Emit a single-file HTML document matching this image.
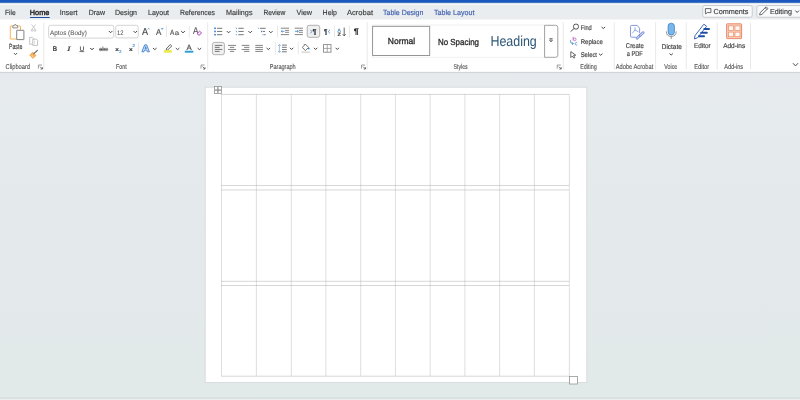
<!DOCTYPE html>
<html><head><meta charset="utf-8"><title>Word</title>
<style>html,body{margin:0;padding:0;width:800px;height:400px;overflow:hidden;background:#e3e8ea;font-family:"Liberation Sans",sans-serif;}
svg{display:block;will-change:transform;text-rendering:geometricPrecision;}</style></head>
<body><svg width="800" height="400" viewBox="0 0 800 400" font-family="Liberation Sans">
<defs><linearGradient id="bg" x1="0" y1="0" x2="0" y2="1"><stop offset="0" stop-color="#e7ebef"/><stop offset="1" stop-color="#e2e9e9"/></linearGradient></defs>
<rect x="0" y="0" width="800" height="400" fill="url(#bg)" stroke="none" stroke-width="1" rx="0" />
<rect x="0" y="0" width="800" height="2.8" fill="#1a58bd" stroke="none" stroke-width="1" rx="0" />
<rect x="0" y="2.8" width="800" height="0.6" fill="#3f74c4" stroke="none" stroke-width="1" rx="0" />
<rect x="0" y="3.4" width="800" height="16.1" fill="#eaedf0" stroke="none" stroke-width="1" rx="0" />
<rect x="0" y="3.6" width="800" height="1.4" fill="#f6f9fb" stroke="none" stroke-width="1" rx="0" />
<rect x="0" y="19.5" width="800" height="52.4" fill="#ffffff" stroke="none" stroke-width="1" rx="0" />
<rect x="0" y="71.9" width="800" height="1.2" fill="#d3d6d9" stroke="none" stroke-width="1" rx="0" />
<rect x="0" y="397.6" width="800" height="1.2" fill="#d3d8da" stroke="none" stroke-width="1" rx="0" />
<rect x="0" y="398.8" width="800" height="1.2" fill="#eceff0" stroke="none" stroke-width="1" rx="0" />
<text x="5.00" y="14.60" font-size="7.39" fill="#3c3c3c" font-weight="normal" textLength="10.60" lengthAdjust="spacingAndGlyphs" font-family="Liberation Sans" font-style="normal" stroke="#3c3c3c" stroke-width="0.15">File</text>
<text x="29.75" y="14.60" font-size="7.39" fill="#2e2e2e" font-weight="normal" textLength="19.65" lengthAdjust="spacingAndGlyphs" font-family="Liberation Sans" font-style="normal" stroke="#2e2e2e" stroke-width="0.45">Home</text>
<text x="59.75" y="14.60" font-size="7.39" fill="#3c3c3c" font-weight="normal" textLength="17.75" lengthAdjust="spacingAndGlyphs" font-family="Liberation Sans" font-style="normal" stroke="#3c3c3c" stroke-width="0.15">Insert</text>
<text x="88.75" y="14.60" font-size="7.39" fill="#3c3c3c" font-weight="normal" textLength="16.25" lengthAdjust="spacingAndGlyphs" font-family="Liberation Sans" font-style="normal" stroke="#3c3c3c" stroke-width="0.15">Draw</text>
<text x="115.00" y="14.60" font-size="7.39" fill="#3c3c3c" font-weight="normal" textLength="22.00" lengthAdjust="spacingAndGlyphs" font-family="Liberation Sans" font-style="normal" stroke="#3c3c3c" stroke-width="0.15">Design</text>
<text x="148.00" y="14.60" font-size="7.39" fill="#3c3c3c" font-weight="normal" textLength="21.00" lengthAdjust="spacingAndGlyphs" font-family="Liberation Sans" font-style="normal" stroke="#3c3c3c" stroke-width="0.15">Layout</text>
<text x="180.00" y="14.60" font-size="7.39" fill="#3c3c3c" font-weight="normal" textLength="35.00" lengthAdjust="spacingAndGlyphs" font-family="Liberation Sans" font-style="normal" stroke="#3c3c3c" stroke-width="0.15">References</text>
<text x="226.00" y="14.60" font-size="7.39" fill="#3c3c3c" font-weight="normal" textLength="26.50" lengthAdjust="spacingAndGlyphs" font-family="Liberation Sans" font-style="normal" stroke="#3c3c3c" stroke-width="0.15">Mailings</text>
<text x="263.50" y="14.60" font-size="7.39" fill="#3c3c3c" font-weight="normal" textLength="21.90" lengthAdjust="spacingAndGlyphs" font-family="Liberation Sans" font-style="normal" stroke="#3c3c3c" stroke-width="0.15">Review</text>
<text x="296.50" y="14.60" font-size="7.39" fill="#3c3c3c" font-weight="normal" textLength="15.50" lengthAdjust="spacingAndGlyphs" font-family="Liberation Sans" font-style="normal" stroke="#3c3c3c" stroke-width="0.15">View</text>
<text x="322.60" y="14.60" font-size="7.39" fill="#3c3c3c" font-weight="normal" textLength="14.40" lengthAdjust="spacingAndGlyphs" font-family="Liberation Sans" font-style="normal" stroke="#3c3c3c" stroke-width="0.15">Help</text>
<text x="347.00" y="14.60" font-size="7.39" fill="#3c3c3c" font-weight="normal" textLength="26.00" lengthAdjust="spacingAndGlyphs" font-family="Liberation Sans" font-style="normal" stroke="#3c3c3c" stroke-width="0.15">Acrobat</text>
<text x="383.00" y="14.60" font-size="7.39" fill="#3d5fae" font-weight="normal" textLength="40.40" lengthAdjust="spacingAndGlyphs" font-family="Liberation Sans" font-style="normal" stroke="#3d5fae" stroke-width="0.15">Table Design</text>
<text x="434.00" y="14.60" font-size="7.39" fill="#3d5fae" font-weight="normal" textLength="40.40" lengthAdjust="spacingAndGlyphs" font-family="Liberation Sans" font-style="normal" stroke="#3d5fae" stroke-width="0.15">Table Layout</text>
<rect x="29.9" y="16.9" width="20.0" height="1.15" fill="#1f4f9e" stroke="none" stroke-width="1" rx="0.5" />
<rect x="702.75" y="5.5" width="49.5" height="11.75" fill="#f9fafb" stroke="#c3c7cb" stroke-width="0.9" rx="2" />
<path d="M705.4 8.6 H710.9 V12.6 H707.2 L705.6 14.0 V12.6 H705.4 Z" fill="none" stroke="#444" stroke-width="0.8" />
<text x="713.50" y="13.90" font-size="7.25" fill="#3c3c3c" font-weight="normal" textLength="35.00" lengthAdjust="spacingAndGlyphs" font-family="Liberation Sans" font-style="normal" stroke="#3c3c3c" stroke-width="0.15">Comments</text>
<rect x="756.9" y="5.5" width="50" height="11.75" fill="#f9fafb" stroke="#c3c7cb" stroke-width="0.9" rx="2" />
<path d="M759.6 15.0 L760.2 12.6 L766.2 6.8 L767.9 8.5 L761.9 14.4 Z M765.2 7.8 L766.9 9.5" fill="none" stroke="#444" stroke-width="0.8" />
<text x="770.00" y="13.90" font-size="7.25" fill="#3c3c3c" font-weight="normal" textLength="21.90" lengthAdjust="spacingAndGlyphs" font-family="Liberation Sans" font-style="normal" stroke="#3c3c3c" stroke-width="0.15">Editing</text>
<path d="M795.70 10.90 L797.20 12.50 L798.70 10.90" fill="none" stroke="#4a4a4a" stroke-width="1.0" stroke-linecap="round" stroke-linejoin="round"/>
<line x1="43.8" y1="22.5" x2="43.8" y2="69.5" stroke="#e2e2e2" stroke-width="0.8" />
<line x1="207.7" y1="22.5" x2="207.7" y2="69.5" stroke="#e2e2e2" stroke-width="0.8" />
<line x1="367.2" y1="22.5" x2="367.2" y2="69.5" stroke="#e2e2e2" stroke-width="0.8" />
<line x1="563.3" y1="22.5" x2="563.3" y2="69.5" stroke="#e2e2e2" stroke-width="0.8" />
<line x1="614.3" y1="22.5" x2="614.3" y2="69.5" stroke="#e2e2e2" stroke-width="0.8" />
<line x1="655.6" y1="22.5" x2="655.6" y2="69.5" stroke="#e2e2e2" stroke-width="0.8" />
<line x1="686.3" y1="22.5" x2="686.3" y2="69.5" stroke="#e2e2e2" stroke-width="0.8" />
<line x1="717.2" y1="22.5" x2="717.2" y2="69.5" stroke="#e2e2e2" stroke-width="0.8" />
<line x1="750.5" y1="22.5" x2="750.5" y2="69.5" stroke="#e2e2e2" stroke-width="0.8" />
<line x1="166.5" y1="25.8" x2="166.5" y2="37.4" stroke="#e2e2e2" stroke-width="0.8" />
<line x1="189.3" y1="25.8" x2="189.3" y2="37.4" stroke="#e2e2e2" stroke-width="0.8" />
<line x1="277.5" y1="25.8" x2="277.5" y2="37.4" stroke="#e2e2e2" stroke-width="0.8" />
<line x1="334.5" y1="25.8" x2="334.5" y2="37.4" stroke="#e2e2e2" stroke-width="0.8" />
<line x1="349.5" y1="25.8" x2="349.5" y2="37.4" stroke="#e2e2e2" stroke-width="0.8" />
<line x1="138.4" y1="42.4" x2="138.4" y2="54.7" stroke="#e2e2e2" stroke-width="0.8" />
<line x1="275.3" y1="42.4" x2="275.3" y2="54.7" stroke="#e2e2e2" stroke-width="0.8" />
<line x1="298.3" y1="42.4" x2="298.3" y2="54.7" stroke="#e2e2e2" stroke-width="0.8" />
<text x="5.60" y="68.90" font-size="7.10" fill="#4a4a4a" font-weight="normal" textLength="24.40" lengthAdjust="spacingAndGlyphs" font-family="Liberation Sans" font-style="normal" stroke="#4a4a4a" stroke-width="0.1">Clipboard</text>
<text x="116.00" y="68.90" font-size="7.10" fill="#4a4a4a" font-weight="normal" textLength="10.80" lengthAdjust="spacingAndGlyphs" font-family="Liberation Sans" font-style="normal" stroke="#4a4a4a" stroke-width="0.1">Font</text>
<text x="269.80" y="68.90" font-size="7.10" fill="#4a4a4a" font-weight="normal" textLength="25.90" lengthAdjust="spacingAndGlyphs" font-family="Liberation Sans" font-style="normal" stroke="#4a4a4a" stroke-width="0.1">Paragraph</text>
<text x="453.60" y="68.90" font-size="7.10" fill="#4a4a4a" font-weight="normal" textLength="14.00" lengthAdjust="spacingAndGlyphs" font-family="Liberation Sans" font-style="normal" stroke="#4a4a4a" stroke-width="0.1">Styles</text>
<text x="580.25" y="68.90" font-size="7.10" fill="#4a4a4a" font-weight="normal" textLength="16.50" lengthAdjust="spacingAndGlyphs" font-family="Liberation Sans" font-style="normal" stroke="#4a4a4a" stroke-width="0.1">Editing</text>
<text x="615.75" y="68.90" font-size="7.10" fill="#4a4a4a" font-weight="normal" textLength="37.50" lengthAdjust="spacingAndGlyphs" font-family="Liberation Sans" font-style="normal" stroke="#4a4a4a" stroke-width="0.1">Adobe Acrobat</text>
<text x="664.25" y="68.90" font-size="7.10" fill="#4a4a4a" font-weight="normal" textLength="13.05" lengthAdjust="spacingAndGlyphs" font-family="Liberation Sans" font-style="normal" stroke="#4a4a4a" stroke-width="0.1">Voice</text>
<text x="694.25" y="68.90" font-size="7.10" fill="#4a4a4a" font-weight="normal" textLength="14.95" lengthAdjust="spacingAndGlyphs" font-family="Liberation Sans" font-style="normal" stroke="#4a4a4a" stroke-width="0.1">Editor</text>
<text x="724.20" y="68.90" font-size="7.10" fill="#4a4a4a" font-weight="normal" textLength="18.80" lengthAdjust="spacingAndGlyphs" font-family="Liberation Sans" font-style="normal" stroke="#4a4a4a" stroke-width="0.1">Add-ins</text>
<path d="M42.0 65.0 H38.4 V68.6" fill="none" stroke="#777" stroke-width="0.7" />
<path d="M40.0 66.6 L42.4 69.0 M42.4 67.2 V69.0 H40.6" fill="none" stroke="#555" stroke-width="0.8" />
<path d="M204.6 65.0 H201 V68.6" fill="none" stroke="#777" stroke-width="0.7" />
<path d="M202.6 66.6 L205 69.0 M205 67.2 V69.0 H203.2" fill="none" stroke="#555" stroke-width="0.8" />
<path d="M365.1 65.0 H361.5 V68.6" fill="none" stroke="#777" stroke-width="0.7" />
<path d="M363.1 66.6 L365.5 69.0 M365.5 67.2 V69.0 H363.7" fill="none" stroke="#555" stroke-width="0.8" />
<path d="M560.8000000000001 65.0 H557.2 V68.6" fill="none" stroke="#777" stroke-width="0.7" />
<path d="M558.8000000000001 66.6 L561.2 69.0 M561.2 67.2 V69.0 H559.4000000000001" fill="none" stroke="#555" stroke-width="0.8" />
<path d="M793.20 63.50 L795.50 65.90 L797.80 63.50" fill="none" stroke="#4a4a4a" stroke-width="1.0" stroke-linecap="round" stroke-linejoin="round"/>
<rect x="10.3" y="26.0" width="10.2" height="13.0" fill="#fff" stroke="#f0a53c" stroke-width="0.85" rx="0.4" />
<path d="M12.7 27.9 L13.2 25.4 H14.4 L15.25 24.1 L16.1 25.4 H17.3 L17.8 27.9 Z" fill="#f2f2f2" stroke="#7a7a7a" stroke-width="0.75" />
<rect x="16.7" y="30.3" width="7.2" height="9.3" fill="#fff" stroke="#6e6e6e" stroke-width="0.85" rx="0.3" />
<text x="9.00" y="48.50" font-size="7.54" fill="#3a3a3a" font-weight="normal" textLength="13.30" lengthAdjust="spacingAndGlyphs" font-family="Liberation Sans" font-style="normal" stroke="#3a3a3a" stroke-width="0.15">Paste</text>
<path d="M14.20 53.35 L15.50 54.65 L16.80 53.35" fill="none" stroke="#4a4a4a" stroke-width="1.0" stroke-linecap="round" stroke-linejoin="round"/>
<path d="M31.6 24.4 L35.4 29.6 M35.6 24.4 L31.8 29.6" fill="none" stroke="#b8b8b8" stroke-width="0.7" />
<circle cx="32.2" cy="30.4" r="0.9" fill="none" stroke="#b8b8b8" stroke-width="0.7"/>
<circle cx="35.0" cy="30.4" r="0.9" fill="none" stroke="#b8b8b8" stroke-width="0.7"/>
<path d="M29.7 37.3 H32.4 L33.4 38.3 V44.2 H29.7 Z" fill="#fff" stroke="#b3b3b3" stroke-width="0.8" />
<path d="M32.8 39.2 H36.6 L37.6 40.2 V45.4 H32.8 Z" fill="#fff" stroke="#b3b3b3" stroke-width="0.8" />
<line x1="34.6" y1="40.6" x2="34.6" y2="44.0" stroke="#c8c8c8" stroke-width="0.6" />
<path d="M29.8 55.2 L32.6 52.2 L36.0 55.4 L33.0 58.4 Z" fill="#f6b35a" stroke="#e58f2c" stroke-width="0.6" stroke-linejoin="round"/>
<line x1="31.6" y1="55.4" x2="33.4" y2="57.0" stroke="#fff3e0" stroke-width="0.6" />
<line x1="33.8" y1="53.6" x2="37.4" y2="50.4" stroke="#666" stroke-width="1.2" stroke-linecap="round"/>
<rect x="48.6" y="25.3" width="65.2" height="12.8" fill="#fff" stroke="#c9c9c9" stroke-width="0.8" rx="2" />
<text x="50.10" y="34.50" font-size="6.67" fill="#585858" font-weight="normal" textLength="36.70" lengthAdjust="spacingAndGlyphs" font-family="Liberation Sans" font-style="normal" stroke="#585858" stroke-width="0.05">Aptos (Body)</text>
<path d="M109.10 31.25 L110.60 32.75 L112.10 31.25" fill="none" stroke="#4a4a4a" stroke-width="1.0" stroke-linecap="round" stroke-linejoin="round"/>
<rect x="115.7" y="25.3" width="22.5" height="12.6" fill="#fff" stroke="#c9c9c9" stroke-width="0.8" rx="2" />
<text x="116.90" y="34.50" font-size="6.67" fill="#555" font-weight="normal" textLength="6.50" lengthAdjust="spacingAndGlyphs" font-family="Liberation Sans" font-style="normal" stroke="#555" stroke-width="0.05">12</text>
<path d="M133.80 31.25 L135.30 32.75 L136.80 31.25" fill="none" stroke="#4a4a4a" stroke-width="1.0" stroke-linecap="round" stroke-linejoin="round"/>
<text x="141.90" y="34.70" font-size="10.14" fill="#4a4a4a" font-weight="normal" textLength="6.10" lengthAdjust="spacingAndGlyphs" font-family="Liberation Sans" font-style="normal" stroke="#4a4a4a" stroke-width="0.15">A</text>
<path d="M147.8 29.4 L148.7 28.3 L149.6 29.4" fill="none" stroke="#4a8fd8" stroke-width="0.8" />
<text x="155.90" y="34.70" font-size="8.55" fill="#4a4a4a" font-weight="normal" textLength="5.30" lengthAdjust="spacingAndGlyphs" font-family="Liberation Sans" font-style="normal" stroke="#4a4a4a" stroke-width="0.15">A</text>
<path d="M161.0 28.4 L162.2 29.5 L163.4 28.4 Z" fill="#5b9ad8" stroke="#5b9ad8" stroke-width="0.5" />
<text x="170.00" y="34.70" font-size="7.54" fill="#555" font-weight="normal" textLength="4.30" lengthAdjust="spacingAndGlyphs" font-family="Liberation Sans" font-style="normal" stroke="#555" stroke-width="0.15">A</text>
<text x="174.70" y="34.70" font-size="6.67" fill="#555" font-weight="normal" textLength="4.40" lengthAdjust="spacingAndGlyphs" font-family="Liberation Sans" font-style="normal" stroke="#555" stroke-width="0.15">a</text>
<path d="M181.40 31.30 L183.00 32.90 L184.60 31.30" fill="none" stroke="#4a4a4a" stroke-width="1.0" stroke-linecap="round" stroke-linejoin="round"/>
<text x="192.90" y="34.25" font-size="9.86" fill="#555" font-weight="normal" textLength="5.50" lengthAdjust="spacingAndGlyphs" font-family="Liberation Sans" font-style="normal" stroke="#555" stroke-width="0.15">A</text>
<path d="M197.0 33.6 L199.6 31.2 L201.6 33.0 L199.0 35.4 Z" fill="#f3e2f6" stroke="#a63ebf" stroke-width="0.9" />
<text x="52.80" y="50.70" font-size="6.81" fill="#444" font-weight="bold" textLength="4.30" lengthAdjust="spacingAndGlyphs" font-family="Liberation Sans" font-style="normal" stroke="#444" stroke-width="0.15">B</text>
<text x="66.90" y="50.70" font-size="6.81" fill="#444" font-weight="normal" textLength="3.60" lengthAdjust="spacingAndGlyphs" font-family="Liberation Serif" font-style="italic" stroke="#444" stroke-width="0.15">I</text>
<text x="79.40" y="50.50" font-size="6.52" fill="#444" font-weight="normal" textLength="4.85" lengthAdjust="spacingAndGlyphs" font-family="Liberation Sans" font-style="normal" stroke="#444" stroke-width="0.15">U</text>
<line x1="79.4" y1="51.6" x2="84.3" y2="51.6" stroke="#444" stroke-width="0.7" />
<path d="M90.40 48.40 L92.00 49.60 L93.60 48.40" fill="none" stroke="#4a4a4a" stroke-width="1.0" stroke-linecap="round" stroke-linejoin="round"/>
<text x="99.20" y="51.00" font-size="6.09" fill="#666" font-weight="normal" textLength="8.70" lengthAdjust="spacingAndGlyphs" font-family="Liberation Sans" font-style="normal" stroke="#666" stroke-width="0.15">abc</text>
<line x1="99.0" y1="49.3" x2="108.2" y2="49.3" stroke="#555" stroke-width="0.9" />
<text x="115.25" y="50.70" font-size="5.22" fill="#333" font-weight="bold" textLength="3.65" lengthAdjust="spacingAndGlyphs" font-family="Liberation Sans" font-style="normal" stroke="#333" stroke-width="0.15">x</text>
<text x="119.20" y="53.00" font-size="4.06" fill="#3a86d0" font-weight="normal" textLength="2.20" lengthAdjust="spacingAndGlyphs" font-family="Liberation Sans" font-style="normal" stroke="#3a86d0" stroke-width="0.15">2</text>
<text x="129.00" y="50.70" font-size="5.22" fill="#333" font-weight="bold" textLength="3.70" lengthAdjust="spacingAndGlyphs" font-family="Liberation Sans" font-style="normal" stroke="#333" stroke-width="0.15">x</text>
<text x="132.40" y="47.00" font-size="4.06" fill="#3a86d0" font-weight="normal" textLength="2.50" lengthAdjust="spacingAndGlyphs" font-family="Liberation Sans" font-style="normal" stroke="#3a86d0" stroke-width="0.15">2</text>
<path d="M141.9 51.8 L144.7 44.8 H146.6 L149.4 51.8 H147.4 L146.8 50.1 H144.5 L143.9 51.8 Z M145.0 48.7 H146.3 L145.65 46.6 Z" fill="#d4e6f9" stroke="#3478cc" stroke-width="0.85" stroke-linejoin="round" fill-rule="evenodd"/>
<path d="M153.30 48.35 L154.80 49.65 L156.30 48.35" fill="none" stroke="#4a4a4a" stroke-width="1.0" stroke-linecap="round" stroke-linejoin="round"/>
<path d="M166.0 49.2 L170.2 44.6 L171.8 46.0 L167.6 50.0 Z" fill="#fff" stroke="#444" stroke-width="0.8" />
<rect x="163.8" y="50.1" width="7.9" height="2.6" fill="#e9e94a" stroke="none" stroke-width="1" rx="0" />
<path d="M176.10 48.35 L177.60 49.65 L179.10 48.35" fill="none" stroke="#4a4a4a" stroke-width="1.0" stroke-linecap="round" stroke-linejoin="round"/>
<text x="186.60" y="49.60" font-size="7.54" fill="#444" font-weight="normal" textLength="5.20" lengthAdjust="spacingAndGlyphs" font-family="Liberation Sans" font-style="normal" stroke="#444" stroke-width="0.15">A</text>
<rect x="184.8" y="50.7" width="8.5" height="2.0" fill="#2f9ed6" stroke="none" stroke-width="1" rx="0" />
<path d="M197.90 48.35 L199.40 49.65 L200.90 48.35" fill="none" stroke="#4a4a4a" stroke-width="1.0" stroke-linecap="round" stroke-linejoin="round"/>
<rect x="214.2" y="27.5" width="1.7" height="1.6" fill="#3d86d2" stroke="none" stroke-width="1" rx="0" />
<line x1="217.0" y1="28.3" x2="222.25" y2="28.3" stroke="#666" stroke-width="0.9" />
<rect x="214.2" y="30.65" width="1.7" height="1.6" fill="#3d86d2" stroke="none" stroke-width="1" rx="0" />
<line x1="217.0" y1="31.45" x2="222.25" y2="31.45" stroke="#666" stroke-width="0.9" />
<rect x="214.2" y="33.900000000000006" width="1.7" height="1.6" fill="#3d86d2" stroke="none" stroke-width="1" rx="0" />
<line x1="217.0" y1="34.7" x2="222.25" y2="34.7" stroke="#666" stroke-width="0.9" />
<path d="M227.10 31.35 L228.60 32.85 L230.10 31.35" fill="none" stroke="#4a4a4a" stroke-width="1.0" stroke-linecap="round" stroke-linejoin="round"/>
<line x1="236.0" y1="27.5" x2="236.8" y2="29.1" stroke="#3d86d2" stroke-width="0.7" />
<line x1="238.4" y1="28.3" x2="243.7" y2="28.3" stroke="#666" stroke-width="0.9" />
<line x1="236.0" y1="30.65" x2="236.8" y2="32.25" stroke="#3d86d2" stroke-width="0.7" />
<line x1="238.4" y1="31.45" x2="243.7" y2="31.45" stroke="#666" stroke-width="0.9" />
<line x1="236.0" y1="33.900000000000006" x2="236.8" y2="35.5" stroke="#3d86d2" stroke-width="0.7" />
<line x1="238.4" y1="34.7" x2="243.7" y2="34.7" stroke="#666" stroke-width="0.9" />
<path d="M248.70 31.35 L250.20 32.85 L251.70 31.35" fill="none" stroke="#4a4a4a" stroke-width="1.0" stroke-linecap="round" stroke-linejoin="round"/>
<line x1="258.2" y1="27.6" x2="258.8" y2="29.0" stroke="#3d86d2" stroke-width="0.6" />
<line x1="259.9" y1="28.3" x2="265.6" y2="28.3" stroke="#666" stroke-width="0.9" />
<rect x="261.0" y="30.7" width="1.2" height="1.5" fill="#3d86d2" stroke="none" stroke-width="1" rx="0" />
<line x1="262.8" y1="31.45" x2="265.1" y2="31.45" stroke="#666" stroke-width="0.9" />
<rect x="262.2" y="34.0" width="1.1" height="1.3" fill="#9cc4ea" stroke="none" stroke-width="1" rx="0" />
<line x1="263.6" y1="34.7" x2="265.6" y2="34.7" stroke="#666" stroke-width="0.9" />
<path d="M269.30 31.35 L270.80 32.85 L272.30 31.35" fill="none" stroke="#4a4a4a" stroke-width="1.0" stroke-linecap="round" stroke-linejoin="round"/>
<rect x="212.4" y="42.4" width="12.0" height="12.3" fill="#f0f0f0" stroke="#9e9e9e" stroke-width="0.8" rx="2" />
<line x1="214.8" y1="45.4" x2="222.25" y2="45.4" stroke="#555" stroke-width="0.8" />
<line x1="214.8" y1="47.4" x2="219.6" y2="47.4" stroke="#555" stroke-width="0.8" />
<line x1="214.8" y1="49.45" x2="222.25" y2="49.45" stroke="#555" stroke-width="0.8" />
<line x1="214.8" y1="51.4" x2="219.6" y2="51.4" stroke="#555" stroke-width="0.8" />
<line x1="228" y1="45.4" x2="236" y2="45.4" stroke="#666" stroke-width="0.8" />
<line x1="229.9" y1="47.4" x2="234.2" y2="47.4" stroke="#666" stroke-width="0.8" />
<line x1="228" y1="49.45" x2="236" y2="49.45" stroke="#666" stroke-width="0.8" />
<line x1="229.9" y1="51.4" x2="234.2" y2="51.4" stroke="#666" stroke-width="0.8" />
<line x1="241.7" y1="45.4" x2="249.4" y2="45.4" stroke="#666" stroke-width="0.8" />
<line x1="244.1" y1="47.4" x2="249.4" y2="47.4" stroke="#666" stroke-width="0.8" />
<line x1="241.7" y1="49.45" x2="249.4" y2="49.45" stroke="#666" stroke-width="0.8" />
<line x1="244.1" y1="51.4" x2="249.4" y2="51.4" stroke="#666" stroke-width="0.8" />
<line x1="255.3" y1="45.4" x2="262.9" y2="45.4" stroke="#666" stroke-width="0.8" />
<line x1="255.3" y1="47.4" x2="262.9" y2="47.4" stroke="#666" stroke-width="0.8" />
<line x1="255.3" y1="49.45" x2="262.9" y2="49.45" stroke="#666" stroke-width="0.8" />
<line x1="255.3" y1="51.4" x2="262.9" y2="51.4" stroke="#666" stroke-width="0.8" />
<path d="M266.80 48.25 L268.30 49.55 L269.80 48.25" fill="none" stroke="#4a4a4a" stroke-width="1.0" stroke-linecap="round" stroke-linejoin="round"/>
<line x1="280.85" y1="28.2" x2="289.05" y2="28.2" stroke="#666" stroke-width="0.8" />
<line x1="285.05" y1="30.4" x2="289.05" y2="30.4" stroke="#666" stroke-width="0.8" />
<line x1="285.05" y1="32.3" x2="289.05" y2="32.3" stroke="#666" stroke-width="0.8" />
<line x1="280.85" y1="34.6" x2="289.05" y2="34.6" stroke="#666" stroke-width="0.8" />
<line x1="281.15000000000003" y1="31.35" x2="284.45000000000005" y2="31.35" stroke="#3d86d2" stroke-width="0.8" />
<path d="M282.45000000000005 30.2 L281.15000000000003 31.35 L282.45000000000005 32.5" fill="none" stroke="#3d86d2" stroke-width="0.8" />
<line x1="294.7" y1="28.2" x2="302.9" y2="28.2" stroke="#666" stroke-width="0.8" />
<line x1="298.9" y1="30.4" x2="302.9" y2="30.4" stroke="#666" stroke-width="0.8" />
<line x1="298.9" y1="32.3" x2="302.9" y2="32.3" stroke="#666" stroke-width="0.8" />
<line x1="294.7" y1="34.6" x2="302.9" y2="34.6" stroke="#666" stroke-width="0.8" />
<line x1="295.0" y1="31.35" x2="298.3" y2="31.35" stroke="#3d86d2" stroke-width="0.8" />
<path d="M297.0 30.2 L298.3 31.35 L297.0 32.5" fill="none" stroke="#3d86d2" stroke-width="0.8" />
<rect x="307.2" y="25.3" width="12.5" height="12.0" fill="#f0f0f0" stroke="#a0a0a0" stroke-width="0.8" rx="2" />
<path d="M310.5 29.8 L311.8 31.6 L310.5 33.4" fill="none" stroke="#3d86d2" stroke-width="0.8" />
<text x="312.60" y="34.40" font-size="7.25" fill="#333" font-weight="bold" textLength="4.00" lengthAdjust="spacingAndGlyphs" font-family="Liberation Sans" font-style="normal" stroke="#333" stroke-width="0.15">¶</text>
<text x="323.90" y="34.40" font-size="7.25" fill="#333" font-weight="bold" textLength="3.40" lengthAdjust="spacingAndGlyphs" font-family="Liberation Sans" font-style="normal" stroke="#333" stroke-width="0.15">¶</text>
<path d="M330.0 29.8 L328.2 31.6 L330.0 33.4" fill="none" stroke="#3d86d2" stroke-width="0.8" />
<text x="337.40" y="31.60" font-size="4.93" fill="#3d86d2" font-weight="normal" textLength="3.40" lengthAdjust="spacingAndGlyphs" font-family="Liberation Sans" font-style="normal" stroke="#3d86d2" stroke-width="0.15">A</text>
<text x="337.40" y="35.90" font-size="4.93" fill="#444" font-weight="bold" textLength="3.40" lengthAdjust="spacingAndGlyphs" font-family="Liberation Sans" font-style="normal" stroke="#444" stroke-width="0.15">Z</text>
<line x1="344.2" y1="27.6" x2="344.2" y2="35.8" stroke="#555" stroke-width="0.9" />
<path d="M342.7 34.2 L344.2 35.9 L345.7 34.2" fill="none" stroke="#555" stroke-width="0.9" />
<text x="353.70" y="33.80" font-size="8.12" fill="#222" font-weight="bold" textLength="5.10" lengthAdjust="spacingAndGlyphs" font-family="Liberation Sans" font-style="normal" stroke="#222" stroke-width="0.15">¶</text>
<line x1="279.4" y1="45.8" x2="279.4" y2="51.2" stroke="#6aa3dc" stroke-width="0.65" />
<path d="M278.3 45.9 L279.4 44.6 L280.5 45.9 M278.3 51.0 L279.4 52.3 L280.5 51.0" fill="none" stroke="#3d86d2" stroke-width="0.8" />
<line x1="282" y1="45.1" x2="286.8" y2="45.1" stroke="#666" stroke-width="0.9" />
<line x1="282" y1="47.3" x2="286.8" y2="47.3" stroke="#666" stroke-width="0.9" />
<line x1="282" y1="49.6" x2="286.8" y2="49.6" stroke="#666" stroke-width="0.9" />
<line x1="282" y1="51.8" x2="286.8" y2="51.8" stroke="#666" stroke-width="0.9" />
<path d="M290.20 48.10 L291.60 49.50 L293.00 48.10" fill="none" stroke="#4a4a4a" stroke-width="1.0" stroke-linecap="round" stroke-linejoin="round"/>
<path d="M302.4 47.4 L305.4 44.2 L308.6 47.4 L305.4 50.6 Z" fill="#fff" stroke="#555" stroke-width="0.8" />
<path d="M304.6 44.9 L303.8 44.0" fill="none" stroke="#555" stroke-width="0.8" />
<circle cx="308.8" cy="48.6" r="0.9" fill="#3d86d2"/>
<rect x="301.4" y="51.5" width="8.5" height="1.4" fill="#d6d6d6" stroke="none" stroke-width="1" rx="0" />
<path d="M314.20 48.10 L315.60 49.50 L317.00 48.10" fill="none" stroke="#4a4a4a" stroke-width="1.0" stroke-linecap="round" stroke-linejoin="round"/>
<rect x="323.5" y="44.6" width="7.5" height="7.6" fill="none" stroke="#8a8a8a" stroke-width="0.9" rx="0" />
<line x1="327.25" y1="44.6" x2="327.25" y2="52.2" stroke="#888" stroke-width="0.7" />
<line x1="323.5" y1="48.4" x2="331.0" y2="48.4" stroke="#888" stroke-width="0.7" />
<path d="M335.90 48.10 L337.30 49.50 L338.70 48.10" fill="none" stroke="#4a4a4a" stroke-width="1.0" stroke-linecap="round" stroke-linejoin="round"/>
<rect x="372.3" y="25.0" width="172.3" height="32.2" fill="#fff" stroke="#ececec" stroke-width="0.7" rx="0" />
<rect x="372.6" y="26.3" width="57.1" height="29.2" fill="#fff" stroke="#8a8a8a" stroke-width="0.9" rx="0" />
<text x="387.80" y="44.25" font-size="8.70" fill="#2a2a2a" font-weight="normal" textLength="27.40" lengthAdjust="spacingAndGlyphs" font-family="Liberation Sans" font-style="normal" stroke="#2a2a2a" stroke-width="0.3">Normal</text>
<text x="437.90" y="44.60" font-size="8.70" fill="#2a2a2a" font-weight="normal" textLength="41.10" lengthAdjust="spacingAndGlyphs" font-family="Liberation Sans" font-style="normal" stroke="#2a2a2a" stroke-width="0.3">No Spacing</text>
<text x="490.40" y="46.35" font-size="14.35" fill="#2f5878" font-weight="normal" textLength="46.40" lengthAdjust="spacingAndGlyphs" font-family="Liberation Sans" font-style="normal" stroke="#2f5878" stroke-width="0.02">Heading</text>
<circle cx="540.5" cy="38.9" r="0.3" fill="#999"/>
<path d="M544.6 25.3 H555.6 Q557.8 25.3 557.8 27.5 V55.1 Q557.8 57.3 555.6 57.3 H544.6 Z" fill="#fff" stroke="#8a8a8a" stroke-width="0.8" />
<line x1="549.4" y1="38.7" x2="552.6" y2="38.7" stroke="#444" stroke-width="0.8" />
<path d="M549.5 40.0 H552.5 L551.0 42.0 Z" fill="#fff" stroke="#444" stroke-width="0.7" stroke-linejoin="round"/>
<circle cx="576.0" cy="26.6" r="2.6" fill="none" stroke="#444" stroke-width="0.9"/>
<line x1="574.1" y1="28.5" x2="570.6" y2="31.6" stroke="#444" stroke-width="0.9" />
<text x="580.70" y="30.00" font-size="6.96" fill="#3a3a3a" font-weight="normal" textLength="11.05" lengthAdjust="spacingAndGlyphs" font-family="Liberation Sans" font-style="normal" stroke="#3a3a3a" stroke-width="0.15">Find</text>
<path d="M601.80 27.25 L603.30 28.55 L604.80 27.25" fill="none" stroke="#4a4a4a" stroke-width="1.0" stroke-linecap="round" stroke-linejoin="round"/>
<line x1="573.2" y1="36.8" x2="573.2" y2="40.6" stroke="#c46fca" stroke-width="0.9" />
<circle cx="574.7" cy="39.3" r="1.3" fill="none" stroke="#c46fca" stroke-width="0.9"/>
<path d="M570.5 40.2 Q569.9 43.7 573.3 43.7 M572.2 42.6 L573.4 43.7 L572.2 44.8" fill="none" stroke="#4a8fd2" stroke-width="0.9" />
<path d="M577.3 42.6 A1.35 1.35 0 1 0 577.3 44.8" fill="none" stroke="#4a8fd2" stroke-width="0.8" />
<text x="580.70" y="43.60" font-size="6.67" fill="#3a3a3a" font-weight="normal" textLength="22.10" lengthAdjust="spacingAndGlyphs" font-family="Liberation Sans" font-style="normal" stroke="#3a3a3a" stroke-width="0.15">Replace</text>
<path d="M570.8 51.6 L570.8 57.6 L572.4 56.0 L573.8 58.2 L574.8 57.6 L573.6 55.4 L575.8 55.2 Z" fill="#fff" stroke="#444" stroke-width="0.8" />
<text x="580.70" y="56.90" font-size="6.67" fill="#3a3a3a" font-weight="normal" textLength="16.30" lengthAdjust="spacingAndGlyphs" font-family="Liberation Sans" font-style="normal" stroke="#3a3a3a" stroke-width="0.15">Select</text>
<path d="M599.20 53.95 L600.70 55.25 L602.20 53.95" fill="none" stroke="#4a4a4a" stroke-width="1.0" stroke-linecap="round" stroke-linejoin="round"/>
<path d="M631.6 25.4 H637.2 L639.6 28.2 V33.2 M636.0 37.2 H631.6 Q630.5 37.2 630.5 36.1 V26.5 Q630.5 25.4 631.6 25.4" fill="none" stroke="#6f86d6" stroke-width="0.85" stroke-linejoin="round"/>
<path d="M635.0 27.8 V30.0 L632.6 32.8 M635.0 30.0 L638.0 31.6" fill="none" stroke="#7a90da" stroke-width="0.8" stroke-linecap="round"/>
<path d="M637.0 38.4 L640.2 35.2" fill="none" stroke="#6f86d6" stroke-width="2.6" stroke-linecap="round"/>
<path d="M637.0 38.4 L640.2 35.2" fill="none" stroke="#fff" stroke-width="1.0" stroke-linecap="round"/>
<path d="M640.0 35.4 L643.2 32.6" fill="none" stroke="#6f86d6" stroke-width="2.6" stroke-linecap="round"/>
<path d="M640.0 35.4 L643.2 32.6" fill="none" stroke="#fff" stroke-width="1.0" stroke-linecap="round"/>
<text x="625.80" y="47.80" font-size="6.96" fill="#3a3a3a" font-weight="normal" textLength="18.00" lengthAdjust="spacingAndGlyphs" font-family="Liberation Sans" font-style="normal" stroke="#3a3a3a" stroke-width="0.15">Create</text>
<text x="626.80" y="55.80" font-size="6.96" fill="#3a3a3a" font-weight="normal" textLength="16.00" lengthAdjust="spacingAndGlyphs" font-family="Liberation Sans" font-style="normal" stroke="#3a3a3a" stroke-width="0.15">a PDF</text>
<path d="M666.4 31.4 Q666.4 36.4 671.2 36.4 Q676.2 36.4 676.2 31.4" fill="none" stroke="#777" stroke-width="0.8" />
<line x1="671.2" y1="36.4" x2="671.2" y2="39.0" stroke="#777" stroke-width="0.8" />
<rect x="668.1" y="23.2" width="6.3" height="11.8" fill="#78b6ec" stroke="#3c7fc6" stroke-width="0.8" rx="3.15" />
<text x="661.80" y="48.50" font-size="6.81" fill="#3a3a3a" font-weight="normal" textLength="20.00" lengthAdjust="spacingAndGlyphs" font-family="Liberation Sans" font-style="normal" stroke="#3a3a3a" stroke-width="0.15">Dictate</text>
<path d="M669.80 53.80 L671.20 55.00 L672.60 53.80" fill="none" stroke="#4a4a4a" stroke-width="1.0" stroke-linecap="round" stroke-linejoin="round"/>
<path d="M694.5 39.0 L695.0 35.6 L703.9 24.2 L706.6 26.3 L697.6 37.7 Z" fill="#fff" stroke="#2756b0" stroke-width="0.9" stroke-linejoin="round"/>
<line x1="704.3" y1="28.9" x2="709.0" y2="28.9" stroke="#1c4ea6" stroke-width="2.0" stroke-linecap="round"/>
<line x1="701.2" y1="32.7" x2="706.8" y2="32.7" stroke="#1c4ea6" stroke-width="2.0" stroke-linecap="round"/>
<line x1="699.0" y1="36.2" x2="704.0" y2="36.2" stroke="#1c4ea6" stroke-width="2.0" stroke-linecap="round"/>
<text x="694.00" y="47.60" font-size="6.96" fill="#3a3a3a" font-weight="normal" textLength="16.60" lengthAdjust="spacingAndGlyphs" font-family="Liberation Sans" font-style="normal" stroke="#3a3a3a" stroke-width="0.15">Editor</text>
<rect x="726.6" y="23.8" width="15.0" height="14.8" fill="#f8cfbc" stroke="#e8805c" stroke-width="0.9" rx="0.6" />
<rect x="728.6" y="25.9" width="5.0" height="4.6" fill="#fff7f3" stroke="#ea8c6a" stroke-width="0.7" rx="0" />
<rect x="735.0" y="25.9" width="5.0" height="4.6" fill="#fff7f3" stroke="#ea8c6a" stroke-width="0.7" rx="0" />
<rect x="728.6" y="32.1" width="5.0" height="4.6" fill="#fff7f3" stroke="#ea8c6a" stroke-width="0.7" rx="0" />
<rect x="735.0" y="32.1" width="5.0" height="4.6" fill="#fff7f3" stroke="#ea8c6a" stroke-width="0.7" rx="0" />
<text x="723.20" y="47.60" font-size="6.96" fill="#3a3a3a" font-weight="normal" textLength="22.00" lengthAdjust="spacingAndGlyphs" font-family="Liberation Sans" font-style="normal" stroke="#3a3a3a" stroke-width="0.15">Add-ins</text>
<rect x="205.2" y="87.2" width="381.6" height="295.2" fill="#fff" stroke="#d4d8da" stroke-width="0.8" rx="0" />
<line x1="221.5" y1="94.4" x2="569.5" y2="94.4" stroke="#a0a0a0" stroke-width="0.85" stroke-dasharray="1 1"/>
<line x1="221.5" y1="185.5" x2="569.5" y2="185.5" stroke="#a0a0a0" stroke-width="0.85" stroke-dasharray="1 1"/>
<line x1="221.5" y1="190.0" x2="569.5" y2="190.0" stroke="#a0a0a0" stroke-width="0.85" stroke-dasharray="1 1"/>
<line x1="221.5" y1="281.3" x2="569.5" y2="281.3" stroke="#a0a0a0" stroke-width="0.85" stroke-dasharray="1 1"/>
<line x1="221.5" y1="285.5" x2="569.5" y2="285.5" stroke="#a0a0a0" stroke-width="0.85" stroke-dasharray="1 1"/>
<line x1="221.5" y1="376.2" x2="569.5" y2="376.2" stroke="#a0a0a0" stroke-width="0.85" stroke-dasharray="1 1"/>
<line x1="221.5" y1="94.4" x2="221.5" y2="376.2" stroke="#b4b4b4" stroke-width="0.85" stroke-dasharray="1 1"/>
<line x1="256.4" y1="94.4" x2="256.4" y2="376.2" stroke="#b4b4b4" stroke-width="0.85" stroke-dasharray="1 1"/>
<line x1="291.3" y1="94.4" x2="291.3" y2="376.2" stroke="#b4b4b4" stroke-width="0.85" stroke-dasharray="1 1"/>
<line x1="325.9" y1="94.4" x2="325.9" y2="376.2" stroke="#b4b4b4" stroke-width="0.85" stroke-dasharray="1 1"/>
<line x1="360.7" y1="94.4" x2="360.7" y2="376.2" stroke="#b4b4b4" stroke-width="0.85" stroke-dasharray="1 1"/>
<line x1="395.4" y1="94.4" x2="395.4" y2="376.2" stroke="#b4b4b4" stroke-width="0.85" stroke-dasharray="1 1"/>
<line x1="430.2" y1="94.4" x2="430.2" y2="376.2" stroke="#b4b4b4" stroke-width="0.85" stroke-dasharray="1 1"/>
<line x1="464.9" y1="94.4" x2="464.9" y2="376.2" stroke="#b4b4b4" stroke-width="0.85" stroke-dasharray="1 1"/>
<line x1="499.6" y1="94.4" x2="499.6" y2="376.2" stroke="#b4b4b4" stroke-width="0.85" stroke-dasharray="1 1"/>
<line x1="534.4" y1="94.4" x2="534.4" y2="376.2" stroke="#b4b4b4" stroke-width="0.85" stroke-dasharray="1 1"/>
<line x1="569.4" y1="94.4" x2="569.4" y2="376.2" stroke="#b4b4b4" stroke-width="0.85" stroke-dasharray="1 1"/>
<rect x="214.4" y="86.6" width="7.0" height="7.0" fill="#fff" stroke="#8c8c8c" stroke-width="0.75" rx="0" />
<rect x="217.3" y="87.0" width="1.2" height="6.2" fill="#8a8a8a" stroke="none" stroke-width="1" rx="0" />
<rect x="214.8" y="89.5" width="6.2" height="1.2" fill="#8a8a8a" stroke="none" stroke-width="1" rx="0" />
<rect x="569.6" y="376.4" width="7.8" height="7.6" fill="#fff" stroke="#959595" stroke-width="0.8" rx="0" />
</svg></body></html>
